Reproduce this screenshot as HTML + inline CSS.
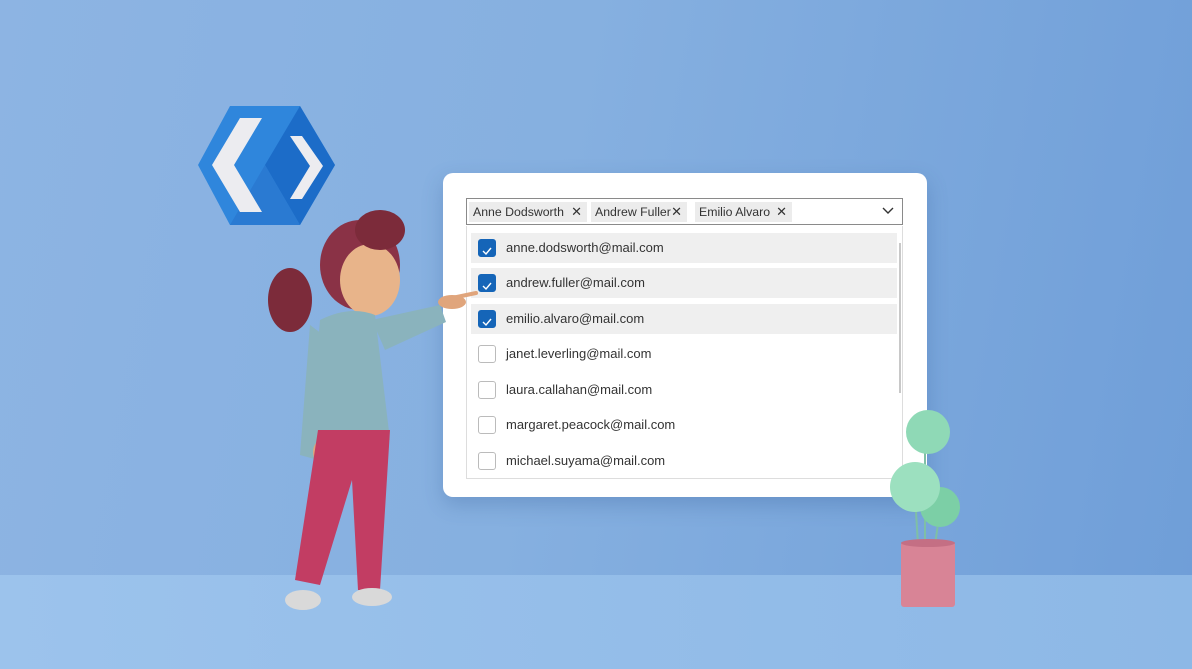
<!DOCTYPE html>
<html><head><style>
*{margin:0;padding:0;box-sizing:border-box}
body{width:1192px;height:669px;overflow:hidden;position:relative;font-family:"Liberation Sans",sans-serif;background:linear-gradient(100deg,#8db4e3 0%,#86b0e0 45%,#6f9ed8 100%)}
.floor{position:absolute;left:0;top:575px;width:1192px;height:94px;background:linear-gradient(90deg,#9cc3ec,#8db8e6)}
.card{position:absolute;left:443px;top:173px;width:484px;height:324px;background:#fff;border-radius:10px;box-shadow:0 8px 20px rgba(40,80,140,.25)}
.input{position:absolute;left:23px;top:25px;width:437px;height:27px;border:1px solid #8a8a8a;background:#fff}
.chip{position:absolute;top:3px;height:20px;background:#ececec;font-size:12.3px;color:#333;line-height:20px;padding-left:4px;white-space:nowrap}
.chip span{position:absolute;right:5px;top:0;font-size:13px}
.list{position:absolute;left:23px;top:53px;width:437px;height:253px;border:1px solid #ddd;border-top:none;overflow:hidden}
.row{position:absolute;left:4px;width:426px;height:30px;font-size:13px;color:#333;line-height:30px;padding-left:35px}
.sel{background:#efefef}
.cb{position:absolute;left:7px;top:6px;width:18px;height:18px;border:1px solid #bbb;border-radius:3px;background:#fff}
.sel .cb{background:#1565b8;border-color:#1565b8}
.sb{position:absolute;width:2px;height:150px;background:#c8c8c8}
</style></head><body>
<div class="floor"></div>
<svg style="position:absolute;left:0;top:0" width="1192" height="669">
<polygon points="198,165 230,106 300,106 335,165 300,225 230,225" fill="#2f86dc"/>
<polygon points="265,165 300,106 335,165 300,225" fill="#1c6cc8"/>
<polygon points="265,165 230,225 300,225" fill="#2a7ad2"/>
<polygon points="240,118 262,118 234,165 262,212 240,212 212,165" fill="#ececf0"/>
<polygon points="290,136 302,136 323,166 302,199 290,199 310,166" fill="#ececf0"/>
<ellipse cx="290" cy="300" rx="22" ry="32" fill="#7c2b3a"/>
<ellipse cx="360" cy="265" rx="40" ry="45" fill="#8a3246"/>
<ellipse cx="370" cy="280" rx="30" ry="36" fill="#e8b48a"/>
<ellipse cx="380" cy="230" rx="25" ry="20" fill="#7c2b3a"/>
<path d="M320 320 Q350 305 375 315 L390 440 L310 440 Z" fill="#8ab3bd"/>
<path d="M310 325 L300 455 L318 460 L330 340 Z" fill="#8ab3bd"/>
<ellipse cx="322" cy="452" rx="9" ry="12" fill="#e0a57c"/>
<path d="M318 430 L390 430 L380 590 L358 590 L352 480 L320 585 L295 580 Z" fill="#c23d63"/>
<ellipse cx="303" cy="600" rx="18" ry="10" fill="#d9d9d9"/>
<ellipse cx="372" cy="597" rx="20" ry="9" fill="#d9d9d9"/>
</svg>
<div class="card">
 <div class="input">
  <div class="chip" style="left:2px;width:118px">Anne Dodsworth<span>✕</span></div>
  <div class="chip" style="left:124px;width:96px">Andrew Fuller<span>✕</span></div>
  <div class="chip" style="left:228px;width:97px">Emilio Alvaro<span>✕</span></div>
  <svg style="position:absolute;right:8px;top:8px" width="12" height="8"><path d="M1 1 L6 6 L11 1" stroke="#333" stroke-width="1.4" fill="none"/></svg>
 </div>
 <div class="list">
  <div class="row sel" style="top:7px"><div class="cb"><svg width="16" height="16"><path d="M4 8 L7 11 L12 5" stroke="#fff" stroke-width="1.4" fill="none"/></svg></div>anne.dodsworth@mail.com</div>
  <div class="row sel" style="top:42px"><div class="cb"><svg width="16" height="16"><path d="M4 8 L7 11 L12 5" stroke="#fff" stroke-width="1.4" fill="none"/></svg></div>andrew.fuller@mail.com</div>
  <div class="row sel" style="top:78px"><div class="cb"><svg width="16" height="16"><path d="M4 8 L7 11 L12 5" stroke="#fff" stroke-width="1.4" fill="none"/></svg></div>emilio.alvaro@mail.com</div>
  <div class="row" style="top:113px"><div class="cb"></div>janet.leverling@mail.com</div>
  <div class="row" style="top:149px"><div class="cb"></div>laura.callahan@mail.com</div>
  <div class="row" style="top:184px"><div class="cb"></div>margaret.peacock@mail.com</div>
  <div class="row" style="top:220px"><div class="cb"></div>michael.suyama@mail.com</div>
  <div class="sb" style="left:432px;top:17px"></div>
 </div>
</div>
<svg style="position:absolute;left:0;top:0" width="1192" height="669">
<path d="M372 320 L440 305 L446 322 L385 350 Z" fill="#8ab3bd"/>
<ellipse cx="452" cy="302" rx="14" ry="7" fill="#e0a57c"/>
<line x1="452" y1="298" x2="476" y2="293" stroke="#e0a57c" stroke-width="4" stroke-linecap="round"/>
<line x1="925" y1="450" x2="925" y2="545" stroke="#7fbfa5" stroke-width="2"/>
<line x1="915" y1="495" x2="918" y2="545" stroke="#7fbfa5" stroke-width="2"/>
<line x1="940" y1="510" x2="935" y2="545" stroke="#7fbfa5" stroke-width="2"/>
<circle cx="940" cy="507" r="20" fill="#7ccfa6"/>
<circle cx="928" cy="432" r="22" fill="#8fd9b6"/>
<circle cx="915" cy="487" r="25" fill="#9ce0bf"/>
<rect x="901" y="542" width="54" height="65" rx="3" fill="#d88496"/>
<ellipse cx="928" cy="543" rx="27" ry="4" fill="#c46f84"/>
</svg>
</body></html>
